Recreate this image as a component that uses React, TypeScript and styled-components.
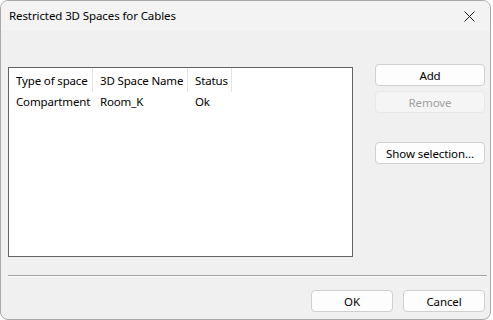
import React from "react";
import styled, { createGlobalStyle } from "styled-components";

const Global = createGlobalStyle`
  html, body { margin: 0; padding: 0; background: #ffffff; }
  * { box-sizing: border-box; }
  body { font-family: "Noto Sans", "Open Sans", sans-serif; font-size: 12px; color: #000; }
`;

const Window = styled.div`
  width: 491px;
  height: 320px;
  border: 1px solid #a9a9a9;
  border-radius: 8px;
  background: #f0f0f0;
  overflow: hidden;
  display: flex;
  flex-direction: column;
`;

const TitleBar = styled.div`
  height: 30px;
  background: #f3f3f3;
  display: flex;
  align-items: center;
  justify-content: space-between;
  padding: 0 8px 0 8px;
  flex: none;
`;

const Title = styled.span`
  font-size: 11.5px;
  letter-spacing: -0.1px;
  margin-top: -1px;
`;

const CloseBtn = styled.div`
  width: 12px;
  height: 12px;
  display: flex;
  align-items: center;
  justify-content: center;
  margin-right: 7px;
`;

const Body = styled.div`
  flex: 1;
  display: flex;
  flex-direction: column;
  padding: 36px 5px 0 7px;
`;

const MainRow = styled.div`
  display: flex;
  gap: 22px;
`;

const ListBox = styled.div`
  width: 345px;
  height: 190px;
  border: 1px solid #646464;
  background: #ffffff;
  flex: none;
`;

const Row = styled.div<{ $header?: boolean }>`
  display: flex;
  height: ${(p) => (p.$header ? "24px" : "18px")};
  align-items: center;
`;

const Cell = styled.div<{ $w: number; $header?: boolean }>`
  width: ${(p) => p.$w}px;
  height: 100%;
  display: flex;
  align-items: center;
  padding-left: 7px;
  font-size: 11.5px;
  letter-spacing: -0.15px;
  white-space: nowrap;
  border-right: ${(p) => (p.$header ? "1px solid #e5e5e5" : "none")};
`;

const SideButtons = styled.div`
  display: flex;
  flex-direction: column;
  margin-top: -3px;
`;

const Button = styled.div<{ $disabled?: boolean; $w?: number }>`
  width: ${(p) => p.$w ?? 110}px;
  height: 22px;
  border: 1px solid ${(p) => (p.$disabled ? "#e8e8e8" : "#d0d0d0")};
  border-radius: 4px;
  background: ${(p) => (p.$disabled ? "#f5f5f5" : "#fdfdfd")};
  color: ${(p) => (p.$disabled ? "#a0a0a0" : "#000")};
  display: flex;
  align-items: center;
  justify-content: center;
  font-size: 11.5px;
  letter-spacing: -0.1px;
  margin-bottom: ${(p) => (p.$w ? 0 : 5)}px;
`;

const Spacer = styled.div`
  height: 24px;
`;

const Separator = styled.div`
  margin-top: 18px;
  height: 2px;
  border-top: 1px solid #a0a0a0;
  border-bottom: 1px solid #ffffff;
  width: 479px;
`;

const Footer = styled.div`
  display: flex;
  justify-content: flex-end;
  gap: 10px;
  margin-top: 13px;
`;

export default function App() {
  return (
    <>
      <Global />
      <Window>
        <TitleBar>
          <Title>Restricted 3D Spaces for Cables</Title>
          <CloseBtn>
            <svg width="11" height="11" viewBox="0 0 11 11">
              <path d="M0.5 0.5 L10.5 10.5 M10.5 0.5 L0.5 10.5" stroke="#1a1a1a" strokeWidth="1" fill="none" />
            </svg>
          </CloseBtn>
        </TitleBar>
        <Body>
          <MainRow>
            <ListBox>
              <Row $header>
                <Cell $w={84} $header>Type of space</Cell>
                <Cell $w={95} $header>3D Space Name</Cell>
                <Cell $w={44} $header>Status</Cell>
              </Row>
              <Row>
                <Cell $w={84}>Compartment</Cell>
                <Cell $w={95}>Room_K</Cell>
                <Cell $w={44}>Ok</Cell>
              </Row>
            </ListBox>
            <SideButtons>
              <Button>Add</Button>
              <Button $disabled>Remove</Button>
              <Spacer />
              <Button>Show selection...</Button>
            </SideButtons>
          </MainRow>
          <Separator />
          <Footer>
            <Button $w={82}>OK</Button>
            <Button $w={82}>Cancel</Button>
          </Footer>
        </Body>
      </Window>
    </>
  );
}
